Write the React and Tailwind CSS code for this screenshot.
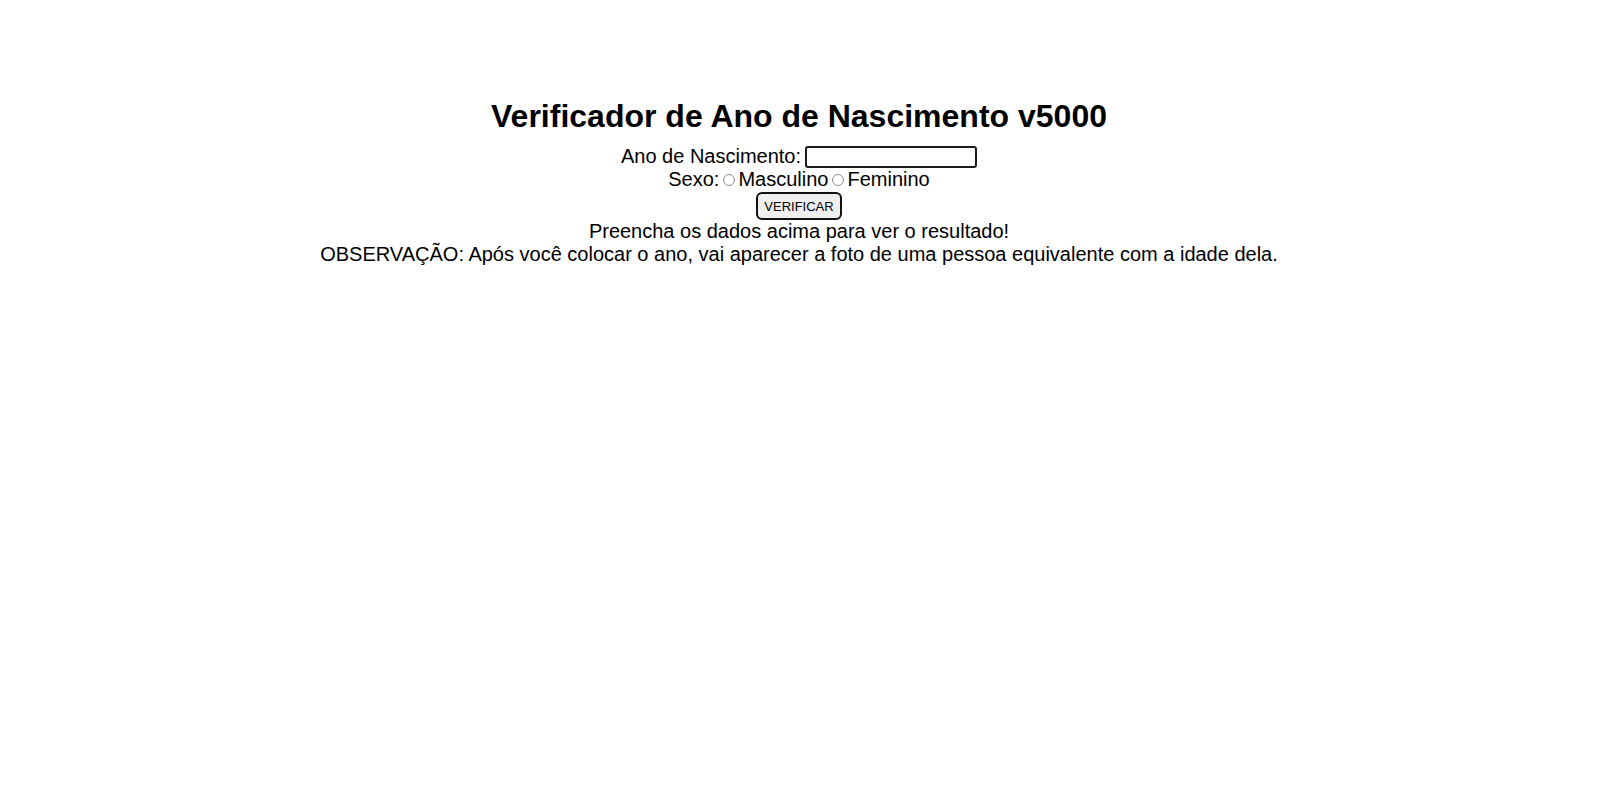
export default function App() {
  return (
    <div className="min-h-[796px] bg-white text-black text-[20px] leading-[23px]" style={{ fontFamily: '"Liberation Sans", Arial, sans-serif' }}>
      <div className="flex flex-col items-center pt-[98px] text-center">
        <h1 className="text-[32px] font-bold leading-[37px] mb-[10px]">Verificador de Ano de Nascimento v5000</h1>
        <div className="flex items-center justify-center">
          <span>Ano de Nascimento:</span>
          <input type="text" className="ml-[4px] w-[172px] h-[22px] border-2 border-[#1c1c1c] rounded-[3px] bg-white outline-none" />
        </div>
        <div className="flex items-center justify-center">
          <span>Sexo:</span>
          <span className="inline-block w-[12px] h-[12px] rounded-full border border-[#8f8f8f] ml-[4px] mr-[3px] mt-[1px]"></span>
          <span>Masculino</span>
          <span className="inline-block w-[12px] h-[12px] rounded-full border border-[#8f8f8f] ml-[4px] mr-[3px] mt-[1px]"></span>
          <span>Feminino</span>
        </div>
        <button className="mt-[1px] px-[6px] h-[28px] border-2 border-[#111] rounded-[6px] bg-[#efefef] text-[13px] leading-[15px]">VERIFICAR</button>
        <div>Preencha os dados acima para ver o resultado!</div>
        <div>OBSERVAÇÃO: Após você colocar o ano, vai aparecer a foto de uma pessoa equivalente com a idade dela.</div>
      </div>
    </div>
  );
}
